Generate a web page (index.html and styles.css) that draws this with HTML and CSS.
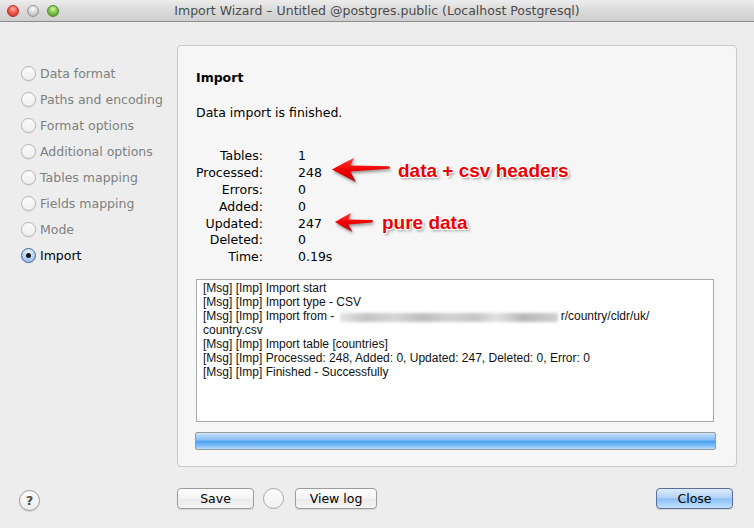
FILE: index.html
```html
<!DOCTYPE html>
<html>
<head>
<meta charset="utf-8">
<link rel="stylesheet" href="styles.css">
</head>
<body>
<div class="window">
  <div class="titlebar">
    <div class="lights">
      <span class="light red"></span>
      <span class="light gray"></span>
      <span class="light green"></span>
    </div>
    <div class="title">Import Wizard – Untitled @postgres.public (Localhost Postgresql)</div>
  </div>
  <div class="main">
    <ul class="steps">
      <li class="step"><span class="radio"></span>Data format</li>
      <li class="step"><span class="radio"></span>Paths and encoding</li>
      <li class="step"><span class="radio"></span>Format options</li>
      <li class="step"><span class="radio"></span>Additional options</li>
      <li class="step"><span class="radio"></span>Tables mapping</li>
      <li class="step"><span class="radio"></span>Fields mapping</li>
      <li class="step"><span class="radio"></span>Mode</li>
      <li class="step current"><span class="radio on"></span>Import</li>
    </ul>
    <div class="panel">
      <div class="heading">Import</div>
      <div class="status">Data import is finished.</div>
      <div class="stats">
        <span class="lbl">Tables:</span><span class="val">1</span>
        <span class="lbl">Processed:</span><span class="val">248</span>
        <span class="lbl">Errors:</span><span class="val">0</span>
        <span class="lbl">Added:</span><span class="val">0</span>
        <span class="lbl">Updated:</span><span class="val">247</span>
        <span class="lbl">Deleted:</span><span class="val">0</span>
        <span class="lbl">Time:</span><span class="val">0.19s</span>
      </div>
      <div class="log">
        <div>[Msg] [Imp] Import start</div>
        <div>[Msg] [Imp] Import type - CSV</div>
        <div>[Msg] [Imp] Import from - <span class="blur"></span>r/country/cldr/uk/</div>
        <div>country.csv</div>
        <div>[Msg] [Imp] Import table [countries]</div>
        <div>[Msg] [Imp] Processed: 248, Added: 0, Updated: 247, Deleted: 0, Error: 0</div>
        <div>[Msg] [Imp] Finished - Successfully</div>
      </div>
      <div class="progress"></div>

      <div class="note note1">
        <svg class="arrow" width="62" height="28" viewBox="0 0 62 28">
          <defs>
            <linearGradient id="ag1" x1="0" y1="0" x2="0" y2="1">
              <stop offset="0" stop-color="#ff4040"/>
              <stop offset="0.5" stop-color="#f00000"/>
              <stop offset="1" stop-color="#c80000"/>
            </linearGradient>
          </defs>
          <path d="M1,12.5 Q12,6 23,1 Q21,5 19.5,8.5 L58,9.2 Q60,10.5 58,11.8 L19.5,14.5 Q21.5,19 25,25 Q12,18.5 1,12.5 Z" fill="url(#ag1)"/>
        </svg>
        <span class="notetext">data + csv headers</span>
      </div>
      <div class="note note2">
        <svg class="arrow" width="44" height="22" viewBox="0 0 44 22">
          <defs>
            <linearGradient id="ag2" x1="0" y1="0" x2="0" y2="1">
              <stop offset="0" stop-color="#ff4040"/>
              <stop offset="0.5" stop-color="#f00000"/>
              <stop offset="1" stop-color="#c80000"/>
            </linearGradient>
          </defs>
          <path d="M1,10 Q9,5 17,1 Q15.5,4.5 14.5,7.5 L38,8 Q40,9 38,10.5 L14.5,12.5 Q16,16 18.5,20 Q9,15 1,10 Z" fill="url(#ag2)"/>
        </svg>
        <span class="notetext">pure data</span>
      </div>
    </div>
  </div>
  <div class="footer">
    <button class="help">?</button>
    <div class="actions">
      <button class="btn save">Save</button>
      <span class="spinner"></span>
      <button class="btn viewlog">View log</button>
    </div>
    <button class="btn primary">Close</button>
  </div>
</div>
</body>
</html>
```

FILE: styles.css
```css
* { box-sizing: border-box; }
html, body { margin: 0; padding: 0; }
body {
  width: 754px;
  height: 528px;
  overflow: hidden;
  background: #ededed;
  font-family: "DejaVu Sans", "Liberation Sans", sans-serif;
  font-size: 12.5px;
  color: #000;
}
.window {
  width: 754px;
  height: 528px;
  display: flex;
  flex-direction: column;
  background: #ededed;
  border-radius: 4px 4px 0 0;
  overflow: hidden;
}
.titlebar {
  height: 22px;
  flex: none;
  display: flex;
  align-items: center;
  position: relative;
  background: linear-gradient(#ececec, #dadada 50%, #cfcfcf);
  border-bottom: 1px solid #8c8c8c;
}
.lights {
  display: flex;
  gap: 8px;
  padding-left: 7px;
}
.light {
  width: 12px;
  height: 12px;
  border-radius: 50%;
  display: block;
}
.light.red {
  background: radial-gradient(circle at 50% 30%, #ffb3a8 0, #f2594c 45%, #c02a1e 100%);
  border: 1px solid #a8362c;
}
.light.gray {
  background: radial-gradient(circle at 50% 30%, #ffffff 0, #d8d8d8 45%, #a9a9a9 100%);
  border: 1px solid #979797;
}
.light.green {
  background: radial-gradient(circle at 50% 30%, #d7f7a8 0, #83c64d 45%, #4c8f1f 100%);
  border: 1px solid #4f8a2a;
}
.title {
  position: absolute;
  left: 0;
  right: 0;
  top: 0;
  line-height: 21px;
  text-align: center;
  font-size: 12.5px;
  color: #4a4a4a;
  pointer-events: none;
}
.main {
  flex: none;
  display: flex;
  padding-top: 23px;
  height: 445px;
}
.steps {
  list-style: none;
  margin: 0;
  padding: 15px 0 0 21px;
  width: 177px;
  flex: none;
}
.step {
  height: 26px;
  display: flex;
  align-items: center;
  color: #7f7f7f;
  white-space: nowrap;
}
.step.current { color: #000; }
.radio {
  width: 15px;
  height: 15px;
  border-radius: 50%;
  border: 1px solid #b4b4b4;
  background: linear-gradient(#fbfbfb, #efefef);
  box-shadow: 0 1px 1px rgba(0,0,0,0.06);
  margin-right: 4px;
  flex: none;
  position: relative;
}
.radio.on {
  border-color: #50679a;
  background: radial-gradient(circle at 50% 30%, #f2f8ff 0, #b5d4f5 50%, #7aaee6 100%);
}
.radio.on::after {
  content: "";
  position: absolute;
  left: 4px;
  top: 4px;
  width: 5px;
  height: 5px;
  border-radius: 50%;
  background: #151515;
}
.panel {
  width: 560px;
  height: 422px;
  background: #f6f6f6;
  border: 1px solid #c9c9c9;
  border-radius: 4px;
  padding: 0 0 0 18px;
  position: relative;
}
.heading {
  font-weight: bold;
  line-height: 18px;
  margin-top: 23px;
}
.status {
  line-height: 18px;
  margin-top: 17px;
}
.stats {
  display: grid;
  grid-template-columns: 67px auto;
  column-gap: 35px;
  grid-auto-rows: 16.9px;
  align-items: center;
  margin-top: 25px;
  line-height: 17px;
}
.lbl { text-align: right; }
.log {
  margin-top: 14px;
  width: 518px;
  height: 143px;
  background: #fff;
  border: 1px solid #a9a9a9;
  padding: 1px 0 0 6px;
  font-family: "Liberation Sans", Arial, sans-serif;
  font-size: 12px;
  line-height: 14px;
  color: #111;
}
.blur {
  display: inline-block;
  vertical-align: -2px;
  width: 218px;
  height: 9px;
  margin: 0 3px 0 2px;
  background: linear-gradient(90deg, #e4e4e4, #c4c4c4 12%, #d6d6d6 25%, #bdbdbd 38%, #d2d2d2 50%, #c6c6c6 62%, #e2e2e2 72%, #b8b8b8 84%, #cfcfcf 100%);
  filter: blur(1.8px);
}
.progress {
  margin-top: 10px;
  margin-left: -1px;
  width: 521px;
  height: 18px;
  border: 1px solid #9a9a9a;
  border-radius: 2px;
  background: linear-gradient(#d0e5fa 0, #a9cff6 20%, #86bdf3 45%, #4da0ee 50%, #5aa9f1 62%, #8cc6f8 85%, #b9dcfb 100%);
}
.note {
  position: absolute;
  display: flex;
  align-items: center;
}
.note1 { left: 153px; top: 111px; }
.note2 { left: 156px; top: 166px; }
.arrow {
  display: block;
  filter: drop-shadow(1px 2px 1.5px rgba(0,0,0,0.4));
}
.notetext {
  font-family: "Liberation Sans", Arial, sans-serif;
  font-weight: bold;
  font-size: 19px;
  color: #ec0000;
  white-space: nowrap;
  text-shadow:
    1px 0 0 #fff, -1px 0 0 #fff, 0 1px 0 #fff, 0 -1px 0 #fff,
    1px 1px 0 #fff, -1px -1px 0 #fff, 1px -1px 0 #fff, -1px 1px 0 #fff,
    2px 2px 3px rgba(0,0,0,0.45);
}
.note1 .notetext { margin-left: 5px; }
.note2 .notetext { margin-left: 4px; }
.footer {
  flex: 1;
  display: flex;
  align-items: flex-start;
  padding: 21px 0 0 19px;
  position: relative;
}
.help {
  width: 21px;
  height: 21px;
  border-radius: 50%;
  border: 1px solid #9a9a9a;
  background: linear-gradient(#ffffff, #ececec);
  box-shadow: 0 1px 1px rgba(0,0,0,0.12);
  font-family: "DejaVu Sans", sans-serif;
  font-size: 13px;
  font-weight: bold;
  color: #4a4a4a;
  padding: 0;
  line-height: 19px;
  margin-top: 2px;
}
.actions {
  display: flex;
  align-items: center;
  margin-left: 137px;
}
.btn {
  height: 21px;
  border: 1px solid #9c9c9c;
  border-radius: 4px;
  background: linear-gradient(#ffffff, #f3f3f3 50%, #e9e9e9 51%, #f4f4f4);
  box-shadow: 0 1px 1px rgba(0,0,0,0.1);
  font-family: "DejaVu Sans", sans-serif;
  font-size: 12.5px;
  color: #000;
  padding: 0;
  line-height: 19px;
}
.save { width: 77px; }
.viewlog { width: 82px; }
.spinner {
  width: 21px;
  height: 21px;
  border-radius: 50%;
  border: 1px solid #a8a8a8;
  background: linear-gradient(#fdfdfd, #f0f0f0);
  margin: 0 11px 0 9px;
  display: block;
}
.primary {
  width: 77px;
  margin-left: auto;
  margin-right: 21px;
  border-color: #5b6d99;
  background: linear-gradient(#dcebfb 0, #b3d3f6 45%, #8ec0f3 52%, #a9d3fb 80%, #c4e2fd 100%);
}
```
